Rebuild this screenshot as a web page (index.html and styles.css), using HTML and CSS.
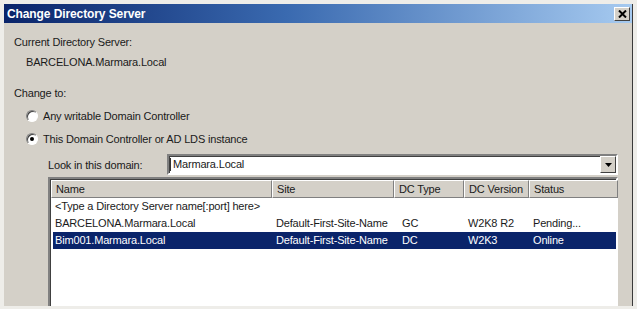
FILE: index.html
```html
<!DOCTYPE html>
<html>
<head>
<meta charset="utf-8">
<link rel="stylesheet" href="styles.css">
</head>
<body>
<div class="frame">
  <div class="window">
    <div class="titlebar">
      <span class="title">Change Directory Server</span>
      <span class="close">
        <svg width="9" height="8" viewBox="0 0 9 8"><path d="M1 0.5 L8 7.5 M8 0.5 L1 7.5" stroke="#000" stroke-width="2"/></svg>
      </span>
    </div>
    <div class="content">
      <div class="line l1">Current Directory Server:</div>
      <div class="line l2">BARCELONA.Marmara.Local</div>
      <div class="line l3">Change to:</div>
      <div class="radio r1"><span class="dot"></span><span>Any writable Domain Controller</span></div>
      <div class="radio r2"><span class="dot checked"></span><span>This Domain Controller or AD LDS instance</span></div>
      <div class="lookin">
        <span class="lookin-label">Look in this domain:</span>
        <div class="combo">
          <span class="combo-text">Marmara.Local</span>
          <span class="combo-btn"><svg width="7" height="4" viewBox="0 0 7 4"><path d="M0 0 H7 L3.5 4 Z" fill="#000"/></svg></span>
        </div>
      </div>
      <div class="list">
        <div class="row header">
          <div class="c name">Name</div>
          <div class="c site">Site</div>
          <div class="c type">DC Type</div>
          <div class="c ver">DC Version</div>
          <div class="c status">Status</div>
        </div>
        <div class="row">
          <div class="c name wide">&lt;Type a Directory Server name[:port] here&gt;</div>
        </div>
        <div class="row">
          <div class="c name">BARCELONA.Marmara.Local</div>
          <div class="c site">Default-First-Site-Name</div>
          <div class="c type val">GC</div>
          <div class="c ver">W2K8 R2</div>
          <div class="c status">Pending...</div>
        </div>
        <div class="row selected">
          <div class="c name">Bim001.Marmara.Local</div>
          <div class="c site">Default-First-Site-Name</div>
          <div class="c type val">DC</div>
          <div class="c ver">W2K3</div>
          <div class="c status">Online</div>
        </div>
      </div>
    </div>
  </div>
</div>
</body>
</html>
```

FILE: styles.css
```css
html, body {
  margin: 0;
  padding: 0;
  background: #e4e2dc;
}
body {
  width: 637px;
  height: 309px;
  overflow: hidden;
  font-family: "Liberation Sans", Arial, sans-serif;
  font-size: 11px;
  letter-spacing: -0.17px;
  color: #1a1a1a;
}
.frame {
  width: 637px;
  height: 309px;
  padding: 4px 4px 0 4px;
  box-sizing: border-box;
  background: #eeede9;
}
.window {
  width: 629px;
  height: 302px;
  background: #d4d0c8;
  border-right: 1px solid #3a3a3a;
  box-sizing: border-box;
  display: flex;
  flex-direction: column;
  overflow: hidden;
}
.titlebar {
  height: 19px;
  flex: none;
  display: flex;
  align-items: center;
  justify-content: space-between;
  padding: 0 2px 0 3px;
  background: linear-gradient(to right, #0a246a 0%, #3a6ab0 45%, #a6caf0 100%);
}
.title {
  color: #fff;
  font-weight: bold;
  font-size: 12px;
  letter-spacing: -0.1px;
}
.close {
  width: 16px;
  height: 14px;
  box-sizing: border-box;
  background: #d4d0c8;
  border: 1px solid;
  border-color: #fff #404040 #404040 #fff;
  display: flex;
  align-items: center;
  justify-content: center;
}
.content {
  padding-left: 10px;
  display: flex;
  flex-direction: column;
  flex: 1;
  min-height: 0;
}
.line {
  height: 14px;
  line-height: 14px;
  white-space: nowrap;
}
.l1 { margin-top: 12px; }
.l2 { margin-top: 6px; padding-left: 12px; }
.l3 { margin-top: 17px; }
.radio {
  height: 14px;
  line-height: 14px;
  display: flex;
  align-items: center;
  gap: 5px;
  padding-left: 12px;
  margin-top: 9px;
}
.dot {
  width: 12px;
  height: 12px;
  box-sizing: border-box;
  border-radius: 50%;
  background: #fff;
  border: 1px solid;
  border-color: #808080 #ffffff #ffffff #808080;
  box-shadow: inset 1px 1px 0 #404040;
  position: relative;
}
.dot.checked::after {
  content: "";
  position: absolute;
  left: 3px;
  top: 3px;
  width: 4px;
  height: 4px;
  border-radius: 50%;
  background: #000;
}
.lookin {
  margin-top: 8px;
  padding-left: 34px;
  display: flex;
  align-items: center;
  height: 21px;
}
.lookin-label {
  width: 119px;
  flex: none;
}
.combo {
  width: 451px;
  height: 21px;
  box-sizing: border-box;
  background: #fff;
  border: 2px solid;
  border-color: #808080 #ffffff #ffffff #808080;
  box-shadow: inset 1px 1px 0 #404040;
  display: flex;
  align-items: center;
  justify-content: space-between;
}
.combo-text {
  padding-left: 2px;
  border-left: 1px solid #333;
  margin-left: 1px;
  line-height: 13px;
}
.combo-btn {
  width: 16px;
  height: 17px;
  box-sizing: border-box;
  background: #d4d0c8;
  border: 1px solid;
  border-color: #fff #404040 #404040 #fff;
  display: flex;
  align-items: center;
  justify-content: center;
}
.list {
  margin-top: 2px;
  margin-left: 34px;
  width: 570px;
  flex: 1;
  box-sizing: border-box;
  background: #fff;
  border: 2px solid;
  border-bottom: 0;
  border-color: #808080 #ffffff #ffffff #808080;
  box-shadow: inset 1px 1px 0 #404040;
  padding: 1px 0 0 1px;
  display: flex;
  flex-direction: column;
}
.row {
  display: flex;
  height: 17px;
  line-height: 17px;
  white-space: nowrap;
}
.row.header {
  height: 18px;
}
.header .c {
  background: #d4d0c8;
  border: 1px solid;
  border-color: #fff #808080 #808080 #fff;
  box-sizing: border-box;
  line-height: 16px;
}
.c {
  padding-left: 4px;
  box-sizing: border-box;
  flex: none;
  overflow: hidden;
}
.name { width: 221px; }
.site { width: 122px; }
.type { width: 70px; }
.ver { width: 65px; }
.status { width: 89px; }
.wide { width: 400px; }
.val { padding-left: 8px; }
.row.selected {
  background: #0a246a;
  color: #fff;
  margin-left: 2px;
}
.row.selected .name { width: 219px; padding-left: 2px; }
```
